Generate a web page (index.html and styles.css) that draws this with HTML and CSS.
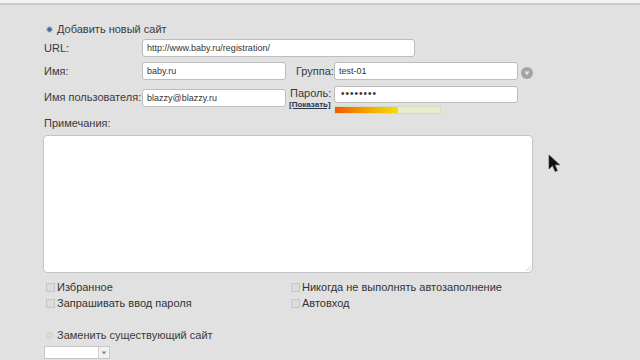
FILE: index.html
```html
<!DOCTYPE html>
<html>
<head>
<meta charset="utf-8">
<link rel="stylesheet" href="styles.css">
</head>
<body>
<div class="topbar"></div>
<div class="form">
  <div class="radio-row first">
    <span class="radio on"></span><span>Добавить новый сайт</span>
  </div>
  <div class="row r-url">
    <span class="label">URL:</span>
    <div class="field w-url">http://www.baby.ru/registration/</div>
  </div>
  <div class="row r-name">
    <span class="label">Имя:</span>
    <div class="field w-short">baby.ru</div>
    <span class="label2">Группа:</span>
    <div class="field w-right">test-01</div>
    <span class="dd-circle"><svg width="12" height="12" viewBox="0 0 12 12"><circle cx="6" cy="6" r="6" fill="#a3a3a3"/><path d="M3.4 4.6 L8.6 4.6 L6 8.2 Z" fill="#e8e8e8"/></svg></span>
  </div>
  <div class="row r-user">
    <span class="label">Имя пользователя:</span>
    <div class="field w-short">blazzy@blazzy.ru</div>
    <div class="pwd-label">
      <span class="pl">Пароль:</span>
      <span class="show">[Показать]</span>
    </div>
    <div class="pwd-col">
      <div class="field w-right pwd">••••••••</div>
      <div class="strength"><div class="fill" style="width:60%"></div></div>
    </div>
  </div>
  <div class="notes-label">Примечания:</div>
  <div class="textarea"><span class="grip"></span></div>
  <div class="checks">
    <div class="col">
      <div class="check"><span class="box"></span>Избранное</div>
      <div class="check"><span class="box"></span>Запрашивать ввод пароля</div>
    </div>
    <div class="col right">
      <div class="check"><span class="box"></span>Никогда не выполнять автозаполнение</div>
      <div class="check"><span class="box"></span>Автовход</div>
    </div>
  </div>
  <div class="radio-row second">
    <span class="radio"></span><span>Заменить существующий сайт</span>
  </div>
  <div class="select"><span class="sel-arrow"><svg width="6" height="4" viewBox="0 0 6 4"><path d="M0.5 0.5 L5.5 0.5 L3 3.5 Z" fill="#8a8a8a"/></svg></span></div>
</div>
<svg class="cursor" width="14" height="20" viewBox="0 0 14 20"><path d="M1 1 L1 15 L4.5 11.6 L7.2 17.5 L9.4 16.5 L6.8 10.8 L11.6 10.8 Z" fill="#111" stroke="#333" stroke-width="0.6" stroke-linejoin="round"/></svg>
</body>
</html>
```
FILE: styles.css
```css
html, body {
  margin: 0;
  padding: 0;
}
body {
  width: 640px;
  height: 360px;
  overflow: hidden;
  background: #e1e1e1;
  font-family: "Liberation Sans", Arial, sans-serif;
  font-size: 11px;
  color: #3a3a3a;
  position: relative;
  white-space: nowrap;
}
.topbar {
  height: 3px;
  background: #f4f4f4;
  border-bottom: 2px solid #c9c9c9;
}
.form {
  padding-left: 44px;
  width: 490px;
}
.radio-row {
  display: flex;
  align-items: center;
  height: 14px;
}
.radio-row.first {
  margin-top: 17px;
  padding-left: 2px;
}
.radio {
  width: 7px;
  height: 7px;
  border-radius: 50%;
  background: #d6d6d6;
  border: 1px solid #cacaca;
  margin-right: 4px;
  box-sizing: border-box;
}
.radio.on {
  background: radial-gradient(circle, #4a6a9a 0 2px, #c9d3df 2.5px);
  border-color: #b7c0cc;
}
.row {
  display: flex;
  align-items: center;
}
.label {
  width: 98px;
  flex: none;
}
.field {
  height: 18px;
  box-sizing: border-box;
  background: #fff;
  border: 1px solid #bdbdbd;
  border-radius: 3px;
  font-size: 9px;
  line-height: 16px;
  padding-left: 4px;
  color: #333;
  flex: none;
}
.r-url { margin-top: 3px; }
.w-url { width: 273px; }
.r-name { margin-top: 5px; }
.w-short { width: 144px; }
.label2 { margin-left: 10px; width: 38px; }
.w-right { width: 184px; }
.dd-circle {
  margin-left: 3px;
  display: flex;
  margin-top: 3px;
}
.r-user {
  margin-top: 6px;
  align-items: flex-start;
}
.r-user .label { margin-top: 5px; }
.r-user .field.w-short { margin-top: 3px; }
.pwd-label {
  display: flex;
  flex-direction: column;
  width: 45px;
  margin-left: 3px;
}
.pl { line-height: 14px; margin-left: 1px; }
.show {
  font-size: 8px;
  font-weight: bold;
  text-decoration: underline;
  color: #2a3550;
  line-height: 10px;
}
.pwd-col {
  display: flex;
  flex-direction: column;
}
.pwd {
  height: 17px;
  line-height: 14px;
  font-size: 10px;
  letter-spacing: 1px;
  padding-left: 6px;
}
.strength {
  margin-top: 3px;
  width: 107px;
  height: 8px;
  background: #e3edcb;
  border: 1px solid #d4dcc0;
  box-sizing: border-box;
}
.strength .fill {
  height: 100%;
  background: linear-gradient(to right, #f05a00, #f7a800 55%, #f6dc10);
}
.notes-label {
  margin-top: 3px;
  height: 14px;
}
.textarea {
  margin-top: 4px;
  margin-left: -1px;
  width: 490px;
  height: 138px;
  box-sizing: border-box;
  background: #fff;
  border: 1px solid #c4c4c4;
  border-radius: 4px;
  position: relative;
}
.grip {
  position: absolute;
  right: 1px;
  bottom: 1px;
  width: 5px;
  height: 5px;
  background: linear-gradient(135deg, transparent 40%, #a8a8a8 45%, transparent 55%, transparent 70%, #a8a8a8 75%, transparent 85%);
}
.checks {
  display: flex;
  margin-top: 6px;
}
.col { width: 245px; }
.check {
  display: flex;
  align-items: center;
  height: 16px;
  padding-left: 2px;
  color: #333;
}
.box {
  width: 9px;
  height: 9px;
  box-sizing: border-box;
  border: 1px solid #c6c6c6;
  background: #dcdcdc;
  margin-right: 2px;
}
.radio-row.second {
  margin-top: 17px;
  padding-left: 2px;
}
.radio-row.second .radio {
  background: #dadada;
  border-color: #cdcdcd;
}
.select {
  margin-top: 4px;
  width: 66px;
  height: 13px;
  box-sizing: border-box;
  background: #fff;
  border: 1px solid #c8c8c8;
  position: relative;
}
.sel-arrow {
  position: absolute;
  right: 0;
  top: 0;
  width: 10px;
  height: 11px;
  border-left: 1px solid #d0d0d0;
  background: #f2f2f2;
  display: flex;
  align-items: center;
  justify-content: center;
}
.cursor {
  position: absolute;
  left: 548px;
  top: 154px;
}
```
